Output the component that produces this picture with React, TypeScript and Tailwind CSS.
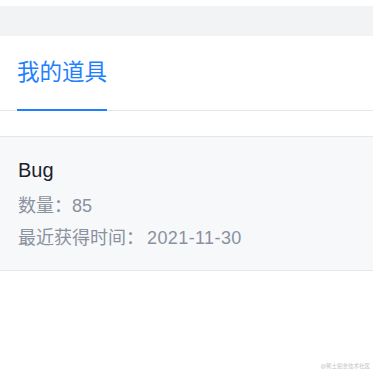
export default function App() {
  return (
    <div className="relative min-h-[373px] bg-white font-['Liberation_Sans','Noto_Sans_CJK_SC',sans-serif]">
      {/* Top strip */}
      <div className="h-[6px]"></div>
      <div className="h-[30px] bg-[#f2f3f5]"></div>

      {/* Tabs */}
      <div className="flex h-[75px] border-b border-[#e4e6eb] px-[17px]">
        <div className="relative flex items-center text-[22.5px] text-[#1e80ff]">
          我的道具
          <span className="absolute left-0 right-0 bottom-[-1px] h-[2px] bg-[#1e80ff]"></span>
        </div>
      </div>

      <div className="h-[25px]"></div>

      {/* Item card */}
      <div className="border-y border-[#e4e6eb] bg-[#f7f8fa] px-[18px] pt-[19px] pb-[16px]">
        <div className="text-[20px] leading-[28px] text-[#1d2129]">Bug</div>
        <div className="mt-[6px] text-[18px] leading-[32px] text-[#8a919f]">数量：85</div>
        <div className="text-[18px] leading-[32px] text-[#8a919f]">
          最近获得时间：<span className="ml-[3px] tracking-[0.4px]">2021-11-30</span>
        </div>
      </div>

      {/* Watermark */}
      <span className="absolute right-[3px] bottom-[4px] text-[5.5px] leading-none text-[#c4c4c4]">@稀土掘金技术社区</span>
    </div>
  );
}
